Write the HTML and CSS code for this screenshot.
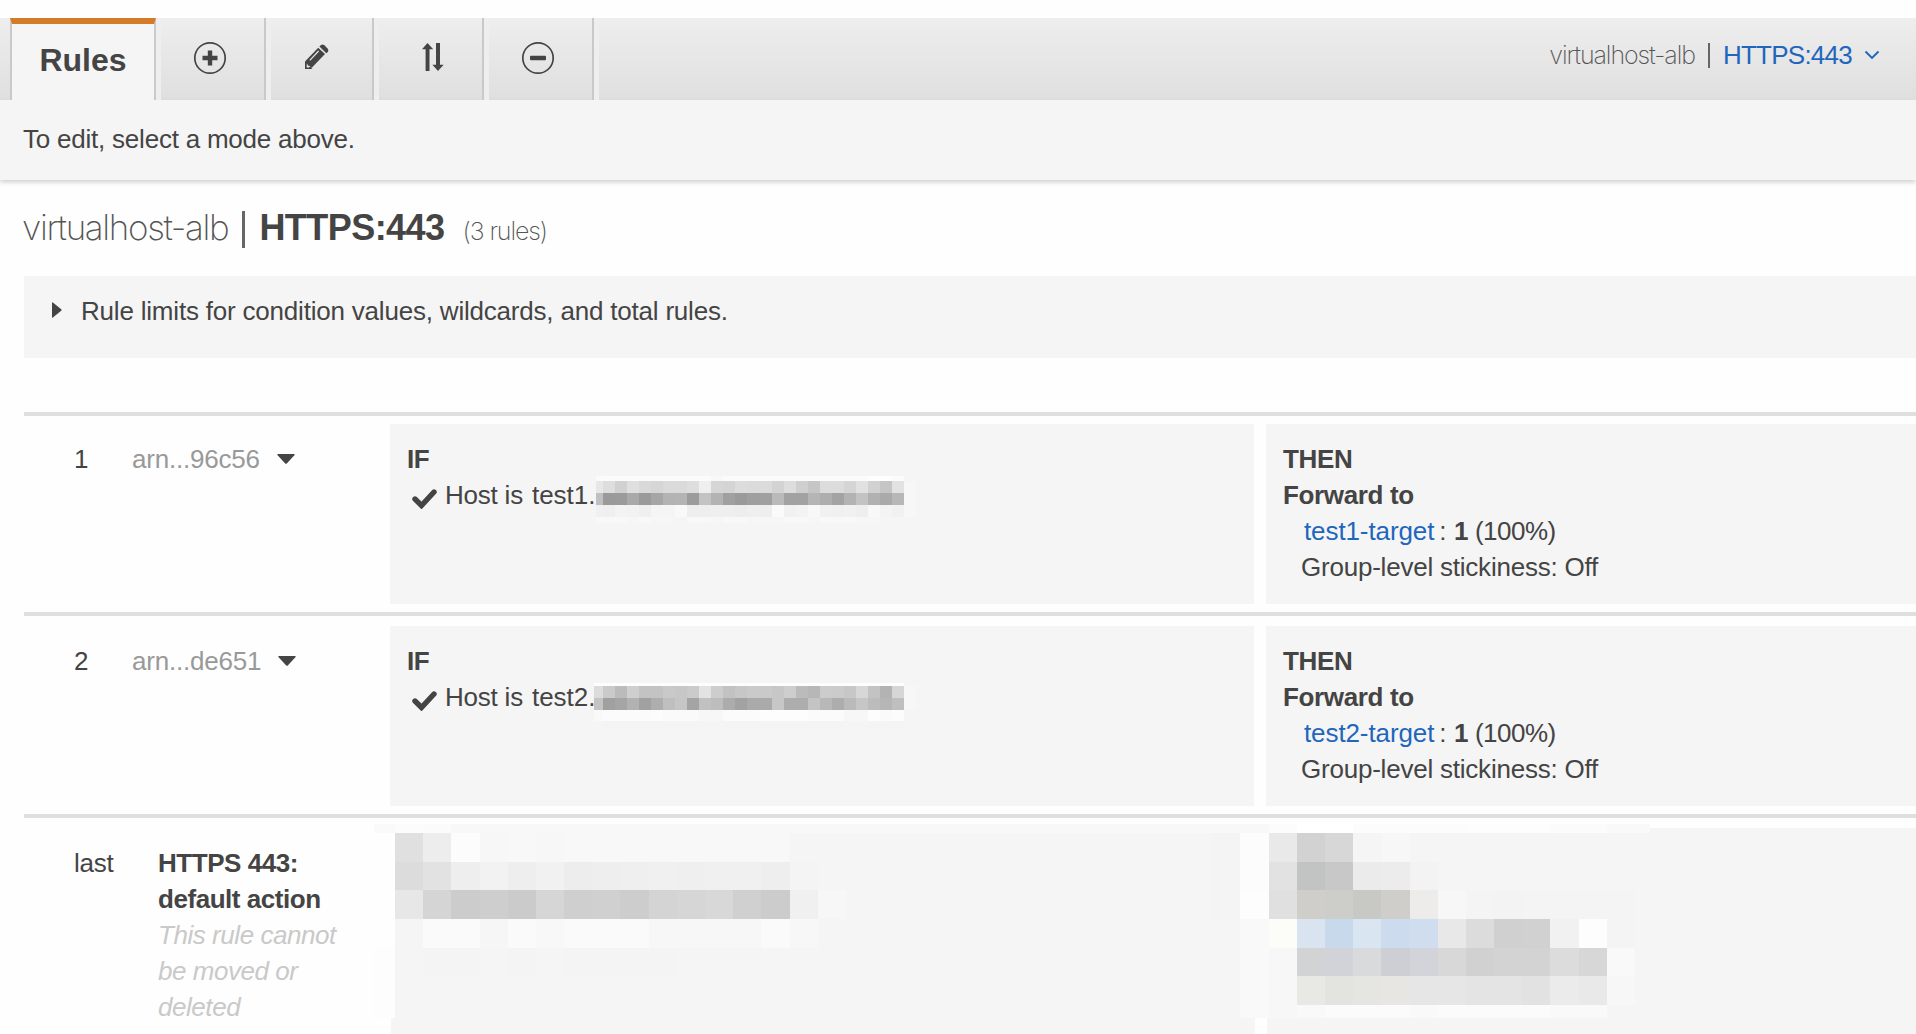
FILE: index.html
```html
<!DOCTYPE html>
<html lang="en">

<head>
  <meta charset="UTF-8">
  <meta name="viewport" content="width=device-width, initial-scale=1.0">
  <title>Rules - virtualhost-alb</title>
  <link rel="stylesheet" href="styles.css">
</head>

<body>
  <!-- Mode tabs -->
  <div class="toolbar">
    <div class="tabs">
      <a href="#" class="tab active">Rules</a>
      <a href="#" class="tab add">
        <svg width="34" height="34" viewBox="0 0 34 34">
          <circle cx="17" cy="17" r="15.2" fill="none" stroke="#444" stroke-width="1.7" />
          <path d="M17 9.5v15M9.5 17h15" stroke="#444" stroke-width="4.4" />
        </svg>
      </a>
      <a href="#" class="tab edit">
        <svg width="34" height="34" viewBox="0 0 34 34">
          <path d="M5 20.500 18.200 6.800l6.800 6.200L12 26.600l-7 1.400z" fill="#444" />
          <path d="M5 20.500V28h7.400z" fill="#444" />
          <path d="M19.400 5.500l1.600-1.600q1.700-1 3.300.4l3.300 3.200q1.600 1.700.2 3.600L26.300 12.200z" fill="#444" />
          <path d="M9.800 19.400 18.600 10" stroke="#e8e8e8" stroke-width="1.200" />
          <path d="M6.800 22.200l1.200 2.200 2.400.9-1.500 1.200H6.700z" fill="#e8e8e8" />
        </svg>
      </a>
      <a href="#" class="tab sort">
        <svg width="34" height="34" viewBox="0 0 34 34">
          <path d="M11.500 2 17.200 8.200H13.500V30H9.600V8.200H6z" fill="#444" />
          <path d="M20 2h4v21.800h3.600L22 30 16.400 23.800H20z" fill="#444" />
        </svg>
      </a>
      <a href="#" class="tab remove">
        <svg width="34" height="34" viewBox="0 0 34 34">
          <circle cx="17" cy="17" r="15.2" fill="none" stroke="#444" stroke-width="1.7" />
          <rect x="9" y="14.8" width="16" height="4.4" rx="1" fill="#444" />
        </svg>
      </a>
    </div>
    <div class="listener">
      <span class="lb-name">virtualhost-alb</span>
      <span class="bar"></span>
      <a href="#">HTTPS:443</a>
      <svg width="16" height="10" viewBox="0 0 16 10">
        <path d="M1.5 1.5 8 8l6.5-6.5" fill="none" stroke="#1f66bd" stroke-width="1.9" />
      </svg>
    </div>
  </div>
  <div class="hint">To edit, select a mode above.</div>

  <div class="content">
    <h1>
      <span class="lb-name">virtualhost-alb</span>
      <span class="bar"></span>
      <b>HTTPS:443</b>
      <span class="count">(3 rules)</span>
    </h1>

    <div class="limits">
      <svg width="10" height="16" viewBox="0 0 10 16">
        <path d="M0 1Q0-.4 1.2.8L9.2 7.2q.8.8 0 1.6L1.2 15.2Q0 16.4 0 15z" fill="#444" />
      </svg>
      <span>Rule limits for condition values, wildcards, and total rules.</span>
    </div>

    <div class="rule first">
      <div class="num">1</div>
      <div class="arn">arn...96c56
        <svg width="18" height="10" viewBox="0 0 18 10"><path d="M1 0h16q1.500 0 .4 1.200L10 9.300q-1 1-2 0L.6 1.200Q-.5 0 1 0z" fill="#444" /></svg>
      </div>
      <div class="box if">
        <b>IF</b>
        <div class="host">
          <svg width="25" height="20" viewBox="0 0 25 20"><path d="M3 10l6.500 6.500L22 3" fill="none" stroke="#444" stroke-width="5.400" stroke-linecap="round" /></svg>
          <span>Host is</span><span class="value">test1.</span>
        </div>
        <div class="mosaic m1" data-mosaic="host1"></div>
      </div>
      <div class="box then">
        <b>THEN</b>
        <b>Forward to</b>
        <div class="target"><a href="#">test1-target</a><span class="colon">:</span><b>1</b> (100%)</div>
        <div class="sticky">Group-level stickiness: Off</div>
      </div>
    </div>

    <div class="rule">
      <div class="num">2</div>
      <div class="arn">arn...de651
        <svg width="18" height="10" viewBox="0 0 18 10"><path d="M1 0h16q1.500 0 .4 1.200L10 9.300q-1 1-2 0L.6 1.200Q-.5 0 1 0z" fill="#444" /></svg>
      </div>
      <div class="box if">
        <b>IF</b>
        <div class="host">
          <svg width="25" height="20" viewBox="0 0 25 20"><path d="M3 10l6.500 6.500L22 3" fill="none" stroke="#444" stroke-width="5.400" stroke-linecap="round" /></svg>
          <span>Host is</span><span class="value">test2.</span>
        </div>
        <div class="mosaic m2" data-mosaic="host2"></div>
      </div>
      <div class="box then">
        <b>THEN</b>
        <b>Forward to</b>
        <div class="target"><a href="#">test2-target</a><span class="colon">:</span><b>1</b> (100%)</div>
        <div class="sticky">Group-level stickiness: Off</div>
      </div>
    </div>

    <div class="rule last">
      <div class="num">last</div>
      <div class="default">
        <b>HTTPS 443: default action</b>
        <i>This rule cannot be moved or deleted</i>
      </div>
      <div class="box if"></div>
      <div class="box then"></div>
      <div class="mosaic m3" data-mosaic="default"></div>
    </div>
  </div>

  <script src="mosaic.js"></script>
</body>

</html>
```
FILE: styles.css
```css
body {
  font-family: "Liberation Sans", Arial, sans-serif;
  font-size: 26px;
  line-height: 36px;
  letter-spacing: -0.22px;
  color: #444;
  background-color: #fefefe;
  margin: 0;
  padding-top: 18px;
  overflow: hidden;
}

a {
  color: #1f66bd;
  text-decoration: none;
}

b {
  letter-spacing: -0.35px;
}

svg {
  display: block;
  flex: none;
}

/* top bar */
.toolbar {
  display: flex;
  justify-content: space-between;
  height: 82px;
  background: linear-gradient(#eeeeee, #dfdfdf);
}

.tabs {
  display: flex;
  padding-left: 10px;
}

.tab {
  box-sizing: border-box;
  width: 110px;
  padding-top: 23px;
  display: flex;
  justify-content: center;
  border-left: 5px solid #eeeeee;
  border-right: 2px solid #c9c9c9;
}

.tab.active {
  width: 146px;
  padding-top: 18px;
  border-left: 2px solid #c9c9c9;
  border-top: 6px solid #d47b2a;
  background-color: #f5f5f5;
  color: #444;
  font-size: 32px;
  font-weight: bold;
  letter-spacing: 0;
}

.tab.add,
.tab.remove {
  padding-right: 5px;
}

.tab.edit {
  width: 108px;
  padding-right: 9px;
}

.tab.sort {
  padding-left: 5px;
}

.tab:last-child {
  box-shadow: 5px 0 0 #eeeeee;
}

.lb-name,
.count {
  font-family: Inter, "Liberation Sans", sans-serif;
  font-weight: 200;
  color: #555;
}

.bar {
  background-color: #666;
}

.listener {
  display: flex;
  align-items: center;
  height: 36px;
  padding-top: 19px;
  padding-right: 36px;
}

.listener .lb-name {
  font-size: 25px;
  letter-spacing: -1.080px;
}

.listener a {
  letter-spacing: -0.75px;
}

.listener .bar {
  width: 2px;
  height: 25px;
  margin: 0 13px;
}

.listener svg {
  margin-left: 12px;
}

.hint {
  box-sizing: border-box;
  height: 80px;
  padding: 21px 23px;
  background-color: #f5f5f5;
  box-shadow: 0 2px 5px #cccccc;
}

.content {
  padding-left: 24px;
}

h1 {
  display: flex;
  align-items: baseline;
  height: 40px;
  margin: 27px 0 29px -2px;
  font-size: 36px;
  line-height: 40px;
  font-weight: normal;
}

h1 .lb-name {
  letter-spacing: -1.350px;
  font-size: 35px;
}

h1 .bar {
  align-self: flex-start;
  width: 3px;
  height: 37px;
  margin: 4px 14px 0;
}

h1 b {
  letter-spacing: -0.55px;
}

h1 .count {
  margin-left: 18px;
  font-size: 25px;
  letter-spacing: -1.100px;
}

.limits {
  display: flex;
  box-sizing: border-box;
  height: 82px;
  padding: 17px 28px;
  margin-bottom: 54px;
  background-color: #f5f5f5;
  letter-spacing: -0.2px;
}

.limits svg {
  margin: 9px 19px 0 0;
}

/* rules list */
.rule {
  position: relative;
  display: flex;
  box-sizing: border-box;
  height: 202px;
  padding-top: 10px;
  border-top: 4px solid #dfdfdf;
}

.rule.first {
  height: 200px;
  padding-top: 8px;
}

.rule.last {
  height: 220px;
}

.num {
  width: 58px;
  padding: 17px 0 0 50px;
}

.arn {
  display: flex;
  width: 258px;
  padding-top: 17px;
  color: #999;
}

.arn svg {
  margin: 13px 0 0 17px;
}

.default {
  width: 190px;
  padding: 17px 42px 0 26px;
  margin-right: 1px;
}

.default b,
.default i {
  display: block;
  letter-spacing: -0.45px;
}

.default i {
  color: #c9c9c9;
}

.box {
  position: relative;
  box-sizing: border-box;
  height: 180px;
  padding: 17px;
  background-color: #f5f5f5;
}

.last .box {
  height: 206px;
}

.box > b {
  display: block;
}

.if {
  width: 864px;
  margin-right: 12px;
}

.then {
  flex: 1;
}

.host {
  display: flex;
}

.host svg {
  margin: 12px 8px 0 5px;
}

.value {
  margin-left: 9px;
  letter-spacing: 0;
}

.target {
  padding-left: 21px;
  letter-spacing: -0.5px;
}

.target a {
  letter-spacing: -0.1px;
}

.colon {
  margin: 0 8px 0 5px;
}

.sticky {
  padding-left: 18px;
}

/* pixelated patches over the private values */
.mosaic {
  position: absolute;
  display: grid;
}

.m1 {
  left: 206px;
  top: 52px;
  width: 320px;
  grid-template-columns: 7px repeat(26, 1fr);
  grid-template-rows: 5px 12px 12px 12px 6px;
}

.m2 {
  left: 204px;
  top: 57px;
  width: 322px;
  grid-template-columns: 9px repeat(26, 1fr);
  grid-template-rows: 3px 12px 12px 11px 8px;
}

.m3 {
  left: 350px;
  top: 6px;
  width: 1276px;
  grid-template-columns: 21px repeat(44, 1fr) 15px;
  grid-template-rows: 9px repeat(6, 1fr) 13px;
  height: 194px;
}
```
FILE: mosaic.js
```js
// each token is a grey level or a full colour, "*n" repeats it
const mosaics = {
  host1: [
    "fa fb*9 f8 fb*12 fe*2 fb f5",
    "e7 de d1 df d9 d6 da da de ef d6 d4 dc db db d3 dd cf c6 dc dc d5 e1 d1 c5 e2 f7",
    "c0 9a 9b a9 9a a6 b3 b4 9c c3 b3 a0 9a 9f a0 ba a2 a2 b5 ae a3 b3 c3 b1 aa b7 f7",
    "f0 ef f3 f2 ef f5 f5 f9 ee ee ef ef ed ef ee fa f1 f3 f8 f1 f0 f1 ee f8 f4 f1 f7",
    "f8*3 f6 f8 f6 f6 f5 f8*2 f6 f8*2 f6*3 f8*2 f6 f8*2 f8 f6*2 f5*3"
  ],
  host2: [
    "fd*26 f5",
    "dc ca bb cf c3 c3 c9 c7 cb e3 cd c2 c7 ca ca c7 ce bb b7 cc cb c7 d7 c3 b3 d6 f7",
    "c4 a0 a5 b2 a1 ae bf c6 a4 c1 bd ac a2 aa aa c7 ad ad c4 b8 ad ba c6 bc b6 bf f7",
    "f9 fb*4 fc fa*3 f7*2 fb*3 fd*4 fb*3 f7*2 fd fa fc f5",
    "f5 f4*8 f5*2 f4*10 f5*2 f4*3 f5"
  ],
  default: [
    "fa fc fb f8*29 fc ff*2 fc*4 fd*3 fb*2 f9*2",
    "fe e0 ed fc f7 f8 f7 f8*8 f5*15 f4 fc e9 d2 d7 f5 f7 f5*9",
    "fe dc e2 ee f2 ee f1 ed ee ef f0 ef f0 f0 ee f4 f5*14 f4 fc e2 c2c4c3 c8 eb ec f3 f5*8",
    "fe e7 d5 cc ce cb d6 cf d0 cd d4 d6 d8 d0 cc f0 f7 f5*13 f4 fd e0 d0cecb cdcdca c8c8c5 d0cecb eeecea f7 f4 f3 f4*4 f5",
    "fe f5 fa*2 f6 fa f8 fa*3 f7*4 fa f7 f5*15 f9 fcfcf8 dae4f0 c9d9ec d9e5f0 ccdbee d0ddee e8 dc d0 d1 f1 fd f4 f5",
    "fd f5 f4*2 f5 f4 f5 f4*4 f5*20 f9 f7 d2d3d5 d2d3d8 d9dadc cecfd4 d3d4d9 d8 d1 d3*2 dc d7 f9 f5",
    "fd f5*30 f9 f7 e8e8e5 e3e3e0 e5e5e2 e8e6e2 e6 e6 e4 e4 e2 eb e9 f7 f5",
    "fd f5*30 f9 f7 f9 fb*3 f9 fb*4 f9*2 f5*2"
  ]
};

document.querySelectorAll("[data-mosaic]").forEach(function (el) {
  mosaics[el.dataset.mosaic].forEach(function (row, y) {
    let x = 1;
    row.split(" ").forEach(function (token) {
      const [color, times] = token.split("*");
      for (let i = 0; i < (Number(times) || 1); i++) {
        const cell = document.createElement("span");
        cell.style.gridArea = (y + 1) + " / " + x++;
        cell.style.backgroundColor = "#" + (color.length === 2 ? color.repeat(3) : color);
        el.appendChild(cell);
      }
    });
  });
});
```
